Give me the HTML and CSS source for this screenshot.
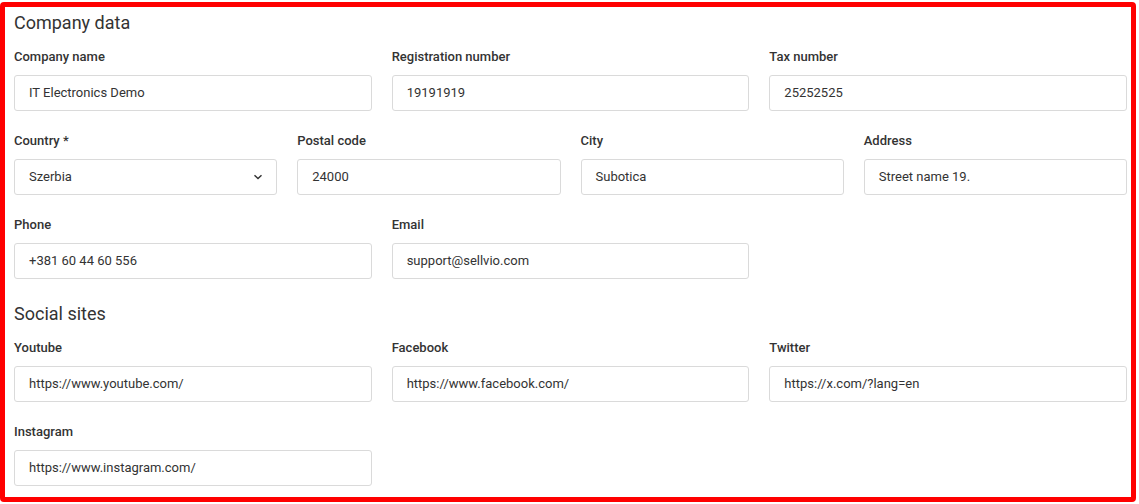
FILE: index.html
```html
<!DOCTYPE html>
<html lang="en">
<head>
<meta charset="utf-8">
<title>Company data</title>
<link rel="stylesheet" href="styles.css">
</head>
<body>
<div class="frame">
  <h2 class="section-title">Company data</h2>
  <div class="row cols-3">
    <div class="field"><label class="label">Company name</label><div class="input">IT Electronics Demo</div></div>
    <div class="field"><label class="label">Registration number</label><div class="input">19191919</div></div>
    <div class="field"><label class="label">Tax number</label><div class="input">25252525</div></div>
  </div>
  <div class="row cols-4">
    <div class="field"><label class="label">Country *</label>
      <div class="input select"><span>Szerbia</span>
        <svg class="chevron" width="10" height="6" viewBox="0 0 10 6"><path d="M1.5 1.2 L5 4.6 L8.5 1.2" fill="none" stroke="#333" stroke-width="1.4"/></svg>
      </div>
    </div>
    <div class="field"><label class="label">Postal code</label><div class="input">24000</div></div>
    <div class="field"><label class="label">City</label><div class="input">Subotica</div></div>
    <div class="field"><label class="label">Address</label><div class="input">Street name 19.</div></div>
  </div>
  <div class="row cols-3">
    <div class="field"><label class="label">Phone</label><div class="input">+381 60 44 60 556</div></div>
    <div class="field"><label class="label">Email</label><div class="input">support@sellvio.com</div></div>
  </div>
  <h2 class="section-title second">Social sites</h2>
  <div class="row cols-3">
    <div class="field"><label class="label">Youtube</label><div class="input">https://www.youtube.com/</div></div>
    <div class="field"><label class="label">Facebook</label><div class="input">https://www.facebook.com/</div></div>
    <div class="field"><label class="label">Twitter</label><div class="input">https://x.com/?lang=en</div></div>
  </div>
  <div class="row cols-3">
    <div class="field"><label class="label">Instagram</label><div class="input">https://www.instagram.com/</div></div>
  </div>
</div>
</body>
</html>
```
FILE: styles.css
```css
* { box-sizing: border-box; }
html, body { margin: 0; padding: 0; background: #fff; }
body {
  font-family: Roboto, "Liberation Sans", Arial, sans-serif;
  color: #333;
  width: 1139px;
  height: 504px;
  overflow: hidden;
}
.frame {
  margin: 2px 3px 0 0;
  width: 1136px;
  height: 500px;
  border: 5px solid #ff0000;
  border-radius: 4px;
  padding: 4px 4px 0 9px;
}
.section-title {
  margin: 0;
  font-size: 18px;
  line-height: 24px;
  font-weight: 400;
  color: #333;
}
.section-title.second { margin-top: 23px; }
.row {
  display: grid;
  column-gap: 20px;
  margin-top: 20px;
}
.section-title + .row { margin-top: 12px; }
.cols-3 { grid-template-columns: repeat(3, 1fr); }
.cols-4 { grid-template-columns: repeat(4, 1fr); }
.field { display: flex; flex-direction: column; }
.label {
  font-size: 13px;
  line-height: 20px;
  font-weight: 500;
  color: #333;
  margin-bottom: 8px;
}
.input {
  height: 36px;
  border: 1px solid #dadada;
  border-radius: 3px;
  padding: 0 14px 1px;
  font-size: 13px;
  color: #333;
  display: flex;
  align-items: center;
}
.select { justify-content: space-between; padding-right: 13px; }
.chevron { margin-right: 0; }
```
